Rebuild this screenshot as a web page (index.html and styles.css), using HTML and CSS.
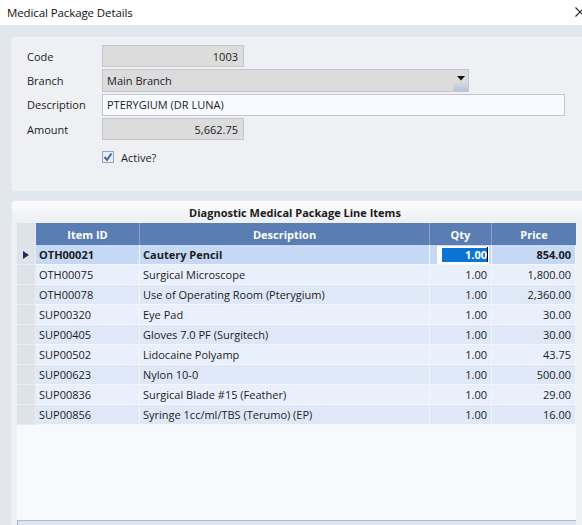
FILE: index.html
```html
<!DOCTYPE html>
<html>
<head>
<meta charset="utf-8">
<link rel="stylesheet" href="styles.css">
</head>
<body>
<div class="window">
  <div class="titlebar">
    <span class="title">Medical Package Details</span>
    <svg class="close" width="10" height="10" viewBox="0 0 10 10"><path d="M0.5 0.5L9.5 9.5M9.5 0.5L0.5 9.5" stroke="#222" stroke-width="1.1"/></svg>
  </div>
  <div class="content">
    <div class="panel form">
      <div class="row"><label>Code</label><div class="input short gray num">1003</div></div>
      <div class="row"><label>Branch</label><div class="input select gray"><span class="sel-text">Main Branch</span><span class="drop"><svg width="8" height="5" viewBox="0 0 8 5"><path d="M0 0h8L4 4.5z" fill="#111"/></svg></span></div></div>
      <div class="row"><label>Description</label><div class="input long white">PTERYGIUM (DR LUNA)</div></div>
      <div class="row"><label>Amount</label><div class="input short gray num">5,662.75</div></div>
      <div class="row check-row"><span class="checkbox"><svg width="10" height="10" viewBox="0 0 10 10"><path d="M1.5 5 L4 7.8 L8.5 1.5" fill="none" stroke="#4a64a3" stroke-width="2"/></svg></span><span class="check-label">Active?</span></div>
    </div>
    <div class="panel gridpanel">
      <div class="gp-head">Diagnostic Medical Package Line Items</div>
      <div class="grid">
        <div class="g-row g-header">
          <div class="c ind"></div>
          <div class="c">Item ID</div>
          <div class="c">Description</div>
          <div class="c">Qty</div>
          <div class="c">Price</div>
        </div>
        <div class="g-row sel">
          <div class="c ind"><svg width="6" height="8" viewBox="0 0 6 8"><path d="M0 0L6 4L0 8z" fill="#1e3050"/></svg></div>
          <div class="c">OTH00021</div>
          <div class="c">Cautery Pencil</div>
          <div class="c r edit"><span class="editbox"><span class="hl">1.00</span><span class="caret"></span></span></div>
          <div class="c r">854.00</div>
        </div>
        <div class="g-row odd"><div class="c ind"></div><div class="c">OTH00075</div><div class="c">Surgical Microscope</div><div class="c r">1.00</div><div class="c r">1,800.00</div></div>
        <div class="g-row even"><div class="c ind"></div><div class="c">OTH00078</div><div class="c">Use of Operating Room (Pterygium)</div><div class="c r">1.00</div><div class="c r">2,360.00</div></div>
        <div class="g-row odd"><div class="c ind"></div><div class="c">SUP00320</div><div class="c">Eye Pad</div><div class="c r">1.00</div><div class="c r">30.00</div></div>
        <div class="g-row even"><div class="c ind"></div><div class="c">SUP00405</div><div class="c">Gloves 7.0 PF (Surgitech)</div><div class="c r">1.00</div><div class="c r">30.00</div></div>
        <div class="g-row odd"><div class="c ind"></div><div class="c">SUP00502</div><div class="c">Lidocaine Polyamp</div><div class="c r">1.00</div><div class="c r">43.75</div></div>
        <div class="g-row even"><div class="c ind"></div><div class="c">SUP00623</div><div class="c">Nylon 10-0</div><div class="c r">1.00</div><div class="c r">500.00</div></div>
        <div class="g-row odd"><div class="c ind"></div><div class="c">SUP00836</div><div class="c">Surgical Blade #15 (Feather)</div><div class="c r">1.00</div><div class="c r">29.00</div></div>
        <div class="g-row even"><div class="c ind"></div><div class="c">SUP00856</div><div class="c">Syringe 1cc/ml/TBS (Terumo) (EP)</div><div class="c r">1.00</div><div class="c r">16.00</div></div>
        <div class="g-empty"></div>
        <div class="g-footer"></div>
      </div>
    </div>
  </div>
</div>
</body>
</html>
```

FILE: styles.css
```css
html, body {
  margin: 0;
  padding: 0;
  overflow: hidden;
  background: #e2e6ed;
}
body {
  font-family: "Open Sans", "Noto Sans", sans-serif;
  font-size: 11px;
  color: #1c1c1c;
}
.window {
  width: 592px;
  height: 525px;
  display: flex;
  flex-direction: column;
}
.titlebar {
  height: 25px;
  background: #ffffff;
  display: flex;
  align-items: center;
  justify-content: space-between;
  padding: 0 0 0 7px;
  box-sizing: border-box;
  flex: none;
}
.title {
  font-size: 11.5px;
  color: #111;
  letter-spacing: -0.1px;
}
.close {
  margin-right: 7px;
  margin-top: -2px;
}
.content {
  flex: 1;
  display: flex;
  flex-direction: column;
  padding: 11px 0 0 11px;
  gap: 8px;
  min-height: 0;
}
.panel {
  background: #eef0f4;
  border-radius: 4px 0 0 4px;
  border: 1px solid #e6e9ef;
  border-right: none;
}
.form {
  height: 156px;
  flex: none;
  box-sizing: border-box;
  padding: 8px 0 0 15px;
  display: flex;
  flex-direction: column;
  gap: 2px;
}
.row {
  display: flex;
  align-items: center;
  height: 22.3px;
}
.row label {
  width: 75px;
  flex: none;
}
.input {
  height: 22px;
  box-sizing: border-box;
  border: 1px solid #c3c7cd;
  display: flex;
  align-items: center;
  padding: 0 4px;
}
.gray { background: #dcdcdc; }
.white { background: #f7faff; }
.short { width: 142px; }
.long { width: 463px; }
.num { justify-content: flex-end; padding-right: 5px; }
.select {
  width: 367px;
  padding: 0 0 0 4px;
  justify-content: space-between;
  height: 23px;
}
.drop {
  width: 15px;
  height: 21px;
  background: linear-gradient(#dcdcdc 0%, #dcdcdc 55%, #b7c6de 100%);
  display: flex;
  align-items: center;
  justify-content: center;
  padding-bottom: 3px;
  box-sizing: border-box;
}
.check-row {
  padding-left: 75px;
  margin-top: 4px;
}
.checkbox {
  width: 12px;
  height: 12px;
  box-sizing: border-box;
  border: 1px solid #9aa6b8;
  background: #e9eef6;
  display: flex;
  align-items: center;
  justify-content: center;
}
.check-label {
  margin-left: 7px;
}
.gridpanel {
  flex: 1;
  display: flex;
  flex-direction: column;
  border-radius: 4px 0 0 0;
  border-bottom: none;
  padding: 0 0 0 5px;
  background: #eef0f4;
  min-height: 0;
}
.gp-head {
  height: 22px;
  flex: none;
  display: flex;
  align-items: center;
  justify-content: center;
  font-weight: bold;
  color: #1a1a1a;
  margin-left: -5px;
  padding-right: 14px;
  background: linear-gradient(#fbfcfd, #eceff3);
  border-radius: 4px 0 0 0;
}
.grid {
  flex: 1;
  display: flex;
  flex-direction: column;
  width: 559px;
  background: #f7f9fd;
}
.g-row {
  display: grid;
  grid-template-columns: 19px 104px 290px 62px 84px;
  height: 20px;
  flex: none;
}
.g-row .c {
  display: flex;
  align-items: center;
  padding: 0 3px;
  border-right: 1px solid #f3f6fb;
  border-bottom: 1px solid #f3f6fb;
  box-sizing: border-box;
  white-space: nowrap;
  overflow: hidden;
}
.g-row .c.r {
  justify-content: flex-end;
  padding-right: 4px;
}
.g-row .c.ind {
  background: #dee3ea;
  border-color: #e9edf2;
  justify-content: center;
  padding: 0;
}
.g-header {
  height: 22px;
  background: #5a7db3;
  color: #ffffff;
  font-weight: bold;
}
.g-header .c {
  justify-content: center;
  border-right: 1px solid #8ba3c9;
  border-bottom: none;
}
.g-header .c:last-child { border-right: none; }
.sel { background: #c5d8f4; font-weight: bold; }
.odd { background: #e9f0fb; }
.even { background: #dfe8f6; }
.edit {
  padding: 0 2px 0 7px !important;
}
.editbox {
  background: #ffffff;
  width: 100%;
  height: 18px;
  display: flex;
  align-items: center;
  justify-content: flex-end;
}
.hl {
  background: #0a74d4;
  color: #ffffff;
  height: 14px;
  line-height: 14px;
  width: 45px;
  text-align: right;
}
.caret {
  width: 1px;
  height: 15px;
  background: #000;
  margin-right: 1px;
}
.g-empty {
  flex: 1;
}
.g-footer {
  height: 4px;
  flex: none;
  background: #dde6f3;
  border-top: 1px solid #a9b9d2;
  border-left: 1px solid #a9b9d2;
}
```
